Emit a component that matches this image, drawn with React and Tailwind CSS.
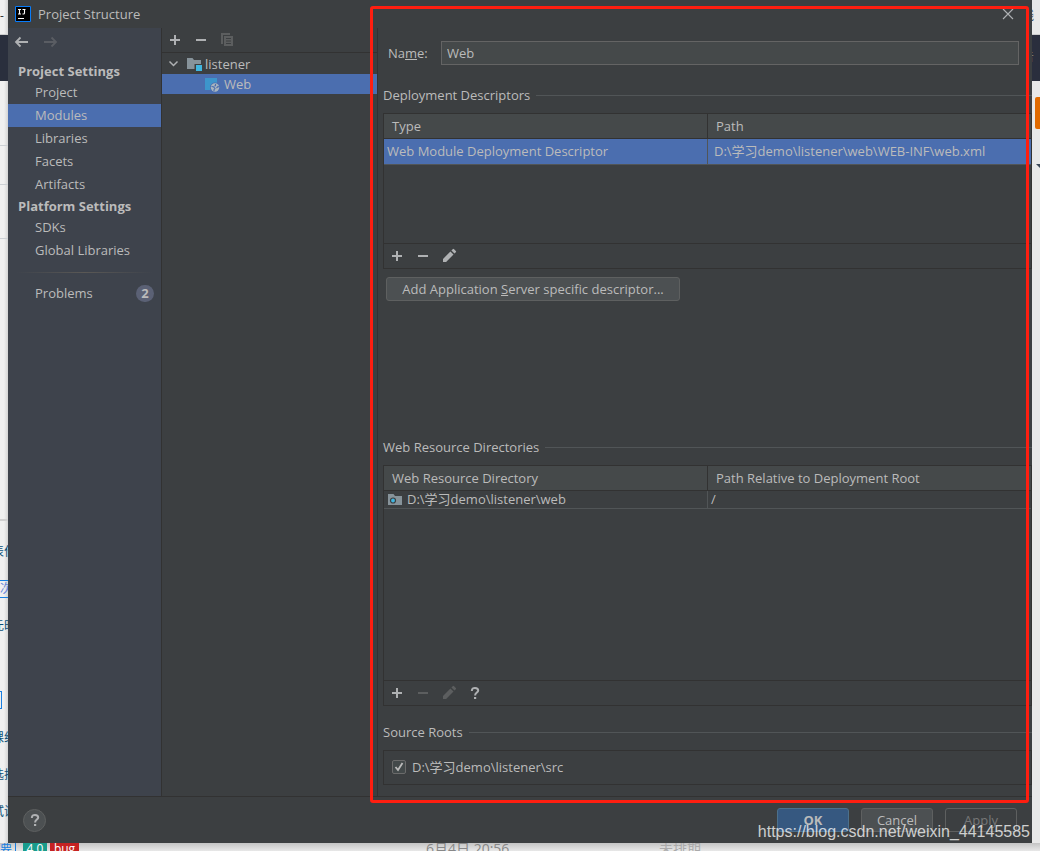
import React from "react";

const projectItems = ["Project", "Modules", "Libraries", "Facets", "Artifacts"];
const platformItems = ["SDKs", "Global Libraries"];

const PlusIcon = () => (
  <svg width="16" height="16" viewBox="0 0 16 16" fill="#afb1b3">
    <path d="M7 3h2v4h4v2H9v4H7V9H3V7h4z" />
  </svg>
);

const MinusIcon = ({ color = "#afb1b3" }) => (
  <svg width="16" height="16" viewBox="0 0 16 16" fill={color}>
    <path d="M3 7h10v2H3z" />
  </svg>
);

const CopyIcon = () => (
  <svg width="16" height="16" viewBox="0 0 16 16" fill="#5c5e5f">
    <path d="M2 1h9v2H4v9H2z" />
    <path fillRule="evenodd" d="M5 4h9v10H5zM7 6v1h5V6zM7 8.5v1h5v-1zM7 11v1h5v-1z" />
  </svg>
);

const PencilIcon = ({ color = "#afb1b3" }) => (
  <svg width="16" height="16" viewBox="0 0 16 16" fill={color}>
    <path d="M9.4 3.5l3.1 3.1L5.1 14H2v-3.1zM10.4 2.5l1.3-1.3q.7-.7 1.400 0l1.7 1.7q.7.7 0 1.400l-1.300 1.300z" />
  </svg>
);

const ArrowIcon = ({ color, flip }) => (
  <svg width="16" height="16" viewBox="0 0 16 16" className={flip ? "rotate-180" : ""}>
    <path d="M6.500 3.500L2 8l4.500 4.500M2 8h12" fill="none" stroke={color} strokeWidth="1.8" />
  </svg>
);

const QuestionIcon = () => (
  <svg width="16" height="16" viewBox="0 0 16 16">
    <path
      d="M4.900 6V5.600C4.900 3.700 6.200 2.900 8 2.900s3.200.9 3.200 2.600C11.200 7.500 8.100 7.700 8.100 10.500"
      fill="none"
      stroke="#afb1b3"
      strokeWidth="2"
    />
    <path d="M7 12h2.200v2H7z" fill="#afb1b3" />
  </svg>
);

const IdeaLogo = () => (
  <svg width="16" height="16" viewBox="0 0 16 16">
    <path d="M.5.5h15v15H.5z" fill="#000" stroke="#087cfa" />
    <path d="M3 3.500h3M4.500 3.500v4.500M3 8h3M7.500 3.500h3M9.500 3.500v3.500q0 1-1 1H7.500" fill="none" stroke="#fff" strokeWidth="1.1" />
    <path d="M3 12h6v1H3z" fill="#fff" />
  </svg>
);

const ModuleIcon = () => (
  <svg width="16" height="16" viewBox="0 0 16 16">
    <path d="M1 2h5.500l1.500 2H15v9H1z" fill="#87939a" />
    <path d="M8.500 8H16v7H8.500z" fill="#3c3f41" />
    <path d="M10 9h6v6h-6z" fill="#40b6e0" />
  </svg>
);

const WebFacetIcon = () => (
  <svg width="16" height="16" viewBox="0 0 16 16">
    <path d="M1 2h12v12H1z" fill="#3d95cb" />
    <circle cx="11" cy="11.500" r="5" fill="#4b6eaf" />
    <circle cx="11" cy="11.500" r="4.200" fill="#a9b5bf" />
    <path d="M7.500 10.500l2 .3 1.500 1.700-1 1.200v1.500M11.500 8v1.500l-1 .8M12.500 12l1.500-1.500 1 .5" fill="none" stroke="#4b6eaf" strokeWidth="1.100" />
  </svg>
);

const WebFolderIcon = () => (
  <svg width="16" height="16" viewBox="0 0 16 16">
    <path d="M1 2h5.500l1.500 2H15v9H1z" fill="#87939a" />
    <circle cx="6" cy="8.500" r="2.500" fill="#40b6e0" stroke="#3c3f41" strokeWidth="1.200" />
  </svg>
);

const Tool = ({ label, disabled, children }) => (
  <button type="button" aria-label={label} disabled={disabled} className="size-4">
    {children}
  </button>
);

const NavItem = ({ label, selected }) => (
  <a
    href="#"
    className={selected ? "block h-[23px] bg-[#4b6eaf] pl-[27px] leading-[22px]" : "block h-[23px] pl-[27px] leading-[22px]"}
  >
    {label}
  </a>
);

const Sidebar = () => (
  <nav className="flex w-[154px] shrink-0 flex-col border-r border-[#323232] bg-[#3e434c]">
    <div className="flex h-[33px] items-center gap-3 px-[6px] pb-[5px]">
      <Tool label="Back">
        <ArrowIcon color="#afb1b3" />
      </Tool>
      <Tool label="Forward" disabled>
        <ArrowIcon color="#5a5d63" flip />
      </Tool>
    </div>
    <h2 className="h-5 pl-[10px] font-bold leading-5">Project Settings</h2>
    {projectItems.map((item) => (
      <NavItem key={item} label={item} selected={item === "Modules"} />
    ))}
    <h2 className="h-5 pl-[10px] font-bold leading-5">Platform Settings</h2>
    {platformItems.map((item) => (
      <NavItem key={item} label={item} />
    ))}
    <hr className="mx-2 my-[10px] h-px border-0 bg-linear-to-r from-transparent via-[#5a5855] to-transparent" />
    <a href="#" className="flex h-5 items-center pr-[7px] pl-[27px]">
      <span className="flex-1">Problems</span>
      <span className="flex h-[17px] w-[18px] items-center justify-center rounded-full bg-[#5b6175] font-bold">2</span>
    </a>
  </nav>
);

const ModuleTree = () => (
  <div className="flex w-[216px] shrink-0 flex-col border-r border-[#323232]">
    <div className="mb-px flex h-[25px] items-center gap-[10px] border-b border-[#323232] px-[5px]">
      <Tool label="Add">
        <PlusIcon />
      </Tool>
      <Tool label="Remove">
        <MinusIcon />
      </Tool>
      <Tool label="Copy" disabled>
        <CopyIcon />
      </Tool>
    </div>
    <ul>
      <li className="flex h-5 items-center pl-[3px]">
        <svg width="16" height="16" viewBox="0 0 16 16">
          <path d="M4.500 5.500l4 4 4-4" fill="none" stroke="#afb1b3" strokeWidth="1.500" />
        </svg>
        <span className="ml-[5px]">
          <ModuleIcon />
        </span>
        <span className="ml-[3px]">listener</span>
      </li>
      <li className="flex h-5 items-center gap-1 bg-[#4b6eaf] pl-[42px]">
        <WebFacetIcon />
        Web
      </li>
    </ul>
  </div>
);

const SectionTitle = ({ children }) => (
  <h3 className="flex h-5 items-center gap-[6px]">
    {children}
    <span className="h-px flex-1 bg-[#515557]" />
  </h3>
);

const HeadCell = ({ children }) => (
  <th className="h-[25px] border-r border-b border-[#323232] bg-[#45494a] px-2 text-left font-normal last:border-r-0">
    {children}
  </th>
);

const Descriptors = () => (
  <section className="mt-5">
    <SectionTitle>Deployment Descriptors</SectionTitle>
    <div className="mt-2 flex h-[156px] flex-col border border-[#323232]">
      <div className="flex-1">
        <table className="w-full table-fixed border-separate border-spacing-0">
          <colgroup>
            <col className="w-[324px]" />
            <col />
          </colgroup>
          <thead>
            <tr>
              <HeadCell>Type</HeadCell>
              <HeadCell>Path</HeadCell>
            </tr>
          </thead>
          <tbody>
            <tr className="bg-[#4b6eaf]">
              <td className="h-[26px] border-r border-b border-[#515557] pb-px pl-[3px]">Web Module Deployment Descriptor</td>
              <td className="h-[26px] border-b border-[#515557] pb-px pl-[6px]">D:\学习demo\listener\web\WEB-INF\web.xml</td>
            </tr>
          </tbody>
        </table>
      </div>
      <div className="flex h-[25px] items-center gap-[10px] border-t border-[#323232] px-[5px]">
        <Tool label="Add descriptor">
          <PlusIcon />
        </Tool>
        <Tool label="Remove descriptor">
          <MinusIcon />
        </Tool>
        <Tool label="Edit descriptor">
          <PencilIcon />
        </Tool>
      </div>
    </div>
    <button
      type="button"
      className="mt-2 ml-[3px] h-6 w-[294px] rounded-[3px] border border-[#5e6060] bg-[#4c5052] leading-[22px]"
    >
      Add Application <u>S</u>erver specific descriptor...
    </button>
  </section>
);

const ResourceDirectories = () => (
  <section className="mt-[136px] flex flex-1 flex-col">
    <SectionTitle>Web Resource Directories</SectionTitle>
    <div className="mt-2 flex flex-1 flex-col border border-[#323232]">
      <div className="flex-1">
        <table className="w-full table-fixed border-separate border-spacing-0">
          <colgroup>
            <col className="w-[324px]" />
            <col />
          </colgroup>
          <thead>
            <tr>
              <HeadCell>Web Resource Directory</HeadCell>
              <HeadCell>Path Relative to Deployment Root</HeadCell>
            </tr>
          </thead>
          <tbody className="leading-[17px]">
            <tr>
              <td className="border-r border-b border-[#515557] pl-[3px]">
                <span className="flex h-[17px] items-center gap-1">
                  <WebFolderIcon />
                  D:\学习demo\listener\web
                </span>
              </td>
              <td className="border-b border-[#515557] pl-[3px]">/</td>
            </tr>
          </tbody>
        </table>
      </div>
      <div className="flex h-[25px] items-center gap-[10px] border-t border-[#323232] px-[5px]">
        <Tool label="Add directory">
          <PlusIcon />
        </Tool>
        <Tool label="Remove directory" disabled>
          <MinusIcon color="#5c5e5f" />
        </Tool>
        <Tool label="Edit directory" disabled>
          <PencilIcon color="#5c5e5f" />
        </Tool>
        <Tool label="Help">
          <QuestionIcon />
        </Tool>
      </div>
    </div>
  </section>
);

const SourceRoots = () => (
  <section className="mt-4 mb-[11px]">
    <SectionTitle>Source Roots</SectionTitle>
    <label className="mt-2 flex h-[35px] items-center gap-[6px] border border-[#323232] pb-px pl-2">
      <span className="grid size-[14px]">
        <input
          type="checkbox"
          defaultChecked
          className="col-start-1 row-start-1 size-[14px] appearance-none rounded-[2px] border border-[#6b6b6b] bg-[#43494a]"
        />
        <svg width="14" height="14" viewBox="0 0 14 14" className="pointer-events-none col-start-1 row-start-1">
          <path d="M3.500 7l2.500 3 4.500-7" fill="none" stroke="#bbb" strokeWidth="1.800" />
        </svg>
      </span>
      D:\学习demo\listener\src
    </label>
  </section>
);

const FacetEditor = () => (
  <main className="flex min-w-0 flex-1 flex-col pl-[5px]">
    <div className="mt-[13px] mr-[13px] flex h-6 items-center">
      <label htmlFor="facet-name" className="w-[58px] pl-[5px]">
        Na<u>m</u>e:
      </label>
      <input
        id="facet-name"
        defaultValue="Web"
        className="h-6 min-w-0 flex-1 border border-[#646464] bg-[#45494a] px-[5px] outline-none"
      />
    </div>
    <Descriptors />
    <ResourceDirectories />
    <SourceRoots />
  </main>
);

const Footer = () => (
  <footer className="flex h-[47px] shrink-0 items-center gap-3 border-t border-[#323232] pr-[15px] pl-[15px]">
    <button
      type="button"
      aria-label="Help"
      className="mr-auto flex size-[23px] items-center justify-center rounded-full border border-[#5e6060] bg-[#4c5052]"
    >
      <QuestionIcon />
    </button>
    <button type="button" className="h-6 w-[72px] rounded-[3px] border border-[#4c708c] bg-[#365880] font-bold leading-[22px]">
      OK
    </button>
    <button type="button" className="h-6 w-[72px] rounded-[3px] border border-[#5e6060] bg-[#4c5052] leading-[22px]">
      Cancel
    </button>
    <button
      type="button"
      disabled
      className="h-6 w-[72px] rounded-[3px] border border-[#5e6060] leading-[22px] text-[#777]"
    >
      Apply
    </button>
  </footer>
);

const Dialog = () => (
  <div className="relative flex min-w-0 flex-1 flex-col bg-[#3c3f41] text-[#bbb]">
    <header className="flex h-7 shrink-0 items-center gap-[7px] px-[7px]">
      <IdeaLogo />
      <h1 className="flex-1">Project Structure</h1>
      <button type="button" aria-label="Close" className="mr-[11px]">
        <svg width="12" height="12" viewBox="0 0 12 12">
          <path d="M1 1l10 10M11 1L1 11" stroke="#afb1b3" strokeWidth="1.100" />
        </svg>
      </button>
    </header>
    <div className="flex flex-1">
      <Sidebar />
      <ModuleTree />
      <FacetEditor />
    </div>
    <Footer />
    {/* highlight frame around the facet editor */}
    <div className="pointer-events-none absolute top-[6px] right-[3px] bottom-10 left-[362px] rounded-[3px] border-3 border-[#ff1e10]" />
    <div className="pointer-events-none absolute right-[2px] bottom-0 font-['Liberation_Sans'] text-[16px] leading-[22px] whitespace-nowrap text-white/75">
      https://blog.csdn.net/weixin_44145585
    </div>
  </div>
);

// the web page that shows around the dialog's edges
const PageLeft = () => (
  <div className="flex w-2 shrink-0 flex-col overflow-hidden bg-linear-to-r from-[#f0f0f0] from-50% to-[#d4d4d4] text-[12px] leading-5 whitespace-nowrap text-[#0b5078]">
    <div className="h-[35px] border-b border-[#ccc] pt-[6px] text-[#333]">-</div>
    <div className="h-[46px] bg-[#2a2f3d]" />
    <div className="h-[65px] border-b border-[#ccd0d4]" />
    <div className="h-[39px] border-b border-[#ccd0d4]" />
    <div className="h-[54px] border-b border-[#ccd0d4]" />
    <div className="h-[282px] border-b-2 border-[#d0d0d0]" />
    <div className="mt-[21px] -ml-2 h-5">表作</div>
    <div className="mt-[18px] h-[18px] border-y border-[#1a7fe0] leading-4 text-[#6a86d8]">次</div>
    <div className="mt-[18px] -ml-2 h-5">元时</div>
    <div className="mt-[55px] h-[18px] w-[2px] border-y border-r border-[#1a7fe0]" />
    <div className="mt-[19px] -ml-2 h-5">课组</div>
    <div className="mt-[17px] -ml-2 h-5">选择</div>
    <div className="mt-[17px] -ml-2 h-5">试设</div>
  </div>
);

const PageRight = () => (
  <div className="flex w-2 shrink-0 flex-col overflow-hidden bg-[#e8e8e8] text-[12px] leading-5">
    <div className="h-[35px] border-b border-[#ccc] pt-[6px] text-[#345]">
      <span className="-ml-[10px]">线</span>
    </div>
    <div className="h-[46px] bg-[#2a2e3d] pt-3 text-[#888878]">
      <span className="-ml-[10px]">告</span>
    </div>
    <div className="mt-4 ml-[3px] h-8 rounded-l-[2px] bg-[#e06a00]" />
    <svg width="8" height="8" viewBox="0 0 8 8" className="mt-8 shrink-0">
      <path d="M4 3h8L8 7z" fill="#3c4858" />
    </svg>
  </div>
);

const PageBottom = () => (
  <div className="flex h-2 shrink-0 overflow-hidden bg-linear-to-b from-[#c4c4c4] to-[#e8e8e8] text-[12px] leading-3 whitespace-nowrap">
    <span className="w-4 border-r border-[#1a7fe0] text-[#1a7fe0]">要</span>
    <span className="ml-[7px] w-6 bg-[#189c8c] text-center text-white">4.0</span>
    <span className="ml-[3px] w-[29px] bg-[#c62222] text-center text-white">bug</span>
    <span className="ml-[347px] w-[233px] text-[14px] leading-3 text-[#888]">6月4日 20:56</span>
    <span className="text-[14px] leading-3 text-[#aaa]">未排期</span>
  </div>
);

export default function App() {
  return (
    <div className="flex min-h-screen flex-col font-['Open_Sans','Noto_Sans_CJK_SC',sans-serif] text-[13px] leading-5">
      <div className="flex flex-1">
        <PageLeft />
        <Dialog />
        <PageRight />
      </div>
      <PageBottom />
    </div>
  );
}
